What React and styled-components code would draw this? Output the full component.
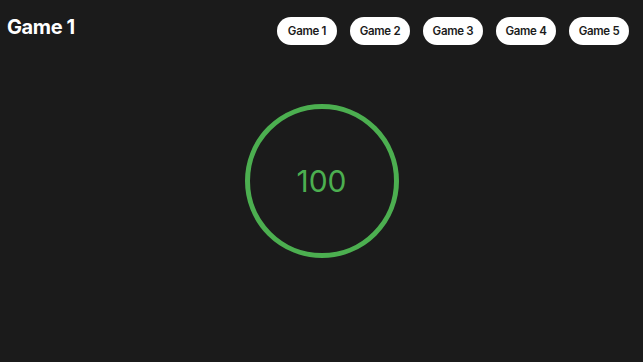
import React from "react";
import styled, { createGlobalStyle } from "styled-components";

const GlobalStyle = createGlobalStyle`
  html, body {
    margin: 0;
    padding: 0;
    background: #1b1b1b;
    font-family: Inter, "Noto Sans", sans-serif;
  }
`;

const Page = styled.div`
  display: flex;
  flex-direction: column;
  height: 100vh;
  box-sizing: border-box;
`;

const Header = styled.header`
  display: flex;
  justify-content: space-between;
  align-items: flex-start;
  padding: 17px 14px 0 7px;
  height: 58px;
  box-sizing: border-box;
`;

const Title = styled.h1`
  margin: -1px 0 0;
  color: #fff;
  font-size: 20px;
  font-weight: 700;
  line-height: 22px;
  letter-spacing: -0.4px;
`;

const Nav = styled.nav`
  display: flex;
  gap: 13px;
`;

const GameButton = styled.button`
  width: 60px;
  height: 28px;
  padding: 0;
  border: none;
  border-radius: 14px;
  background: #fff;
  color: #1b1b1b;
  font-family: Inter, "Noto Sans", sans-serif;
  font-size: 11.5px;
  font-weight: 600;
  letter-spacing: -0.3px;
  cursor: pointer;
`;

const Main = styled.main`
  display: flex;
  justify-content: center;
  padding-top: 46px;
`;

const Ring = styled.div`
  width: 154px;
  height: 154px;
  box-sizing: border-box;
  border: 5px solid #4caf50;
  border-radius: 50%;
  display: flex;
  align-items: center;
  justify-content: center;
  color: #4caf50;
  font-size: 30px;
  font-weight: 400;
`;

const games = ["Game 1", "Game 2", "Game 3", "Game 4", "Game 5"];

export default function App() {
  const [current, setCurrent] = React.useState(0);
  return (
    <Page>
      <GlobalStyle />
      <Header>
        <Title>{games[current]}</Title>
        <Nav>
          {games.map((g, i) => (
            <GameButton key={g} onClick={() => setCurrent(i)}>
              {g}
            </GameButton>
          ))}
        </Nav>
      </Header>
      <Main>
        <Ring>100</Ring>
      </Main>
    </Page>
  );
}
